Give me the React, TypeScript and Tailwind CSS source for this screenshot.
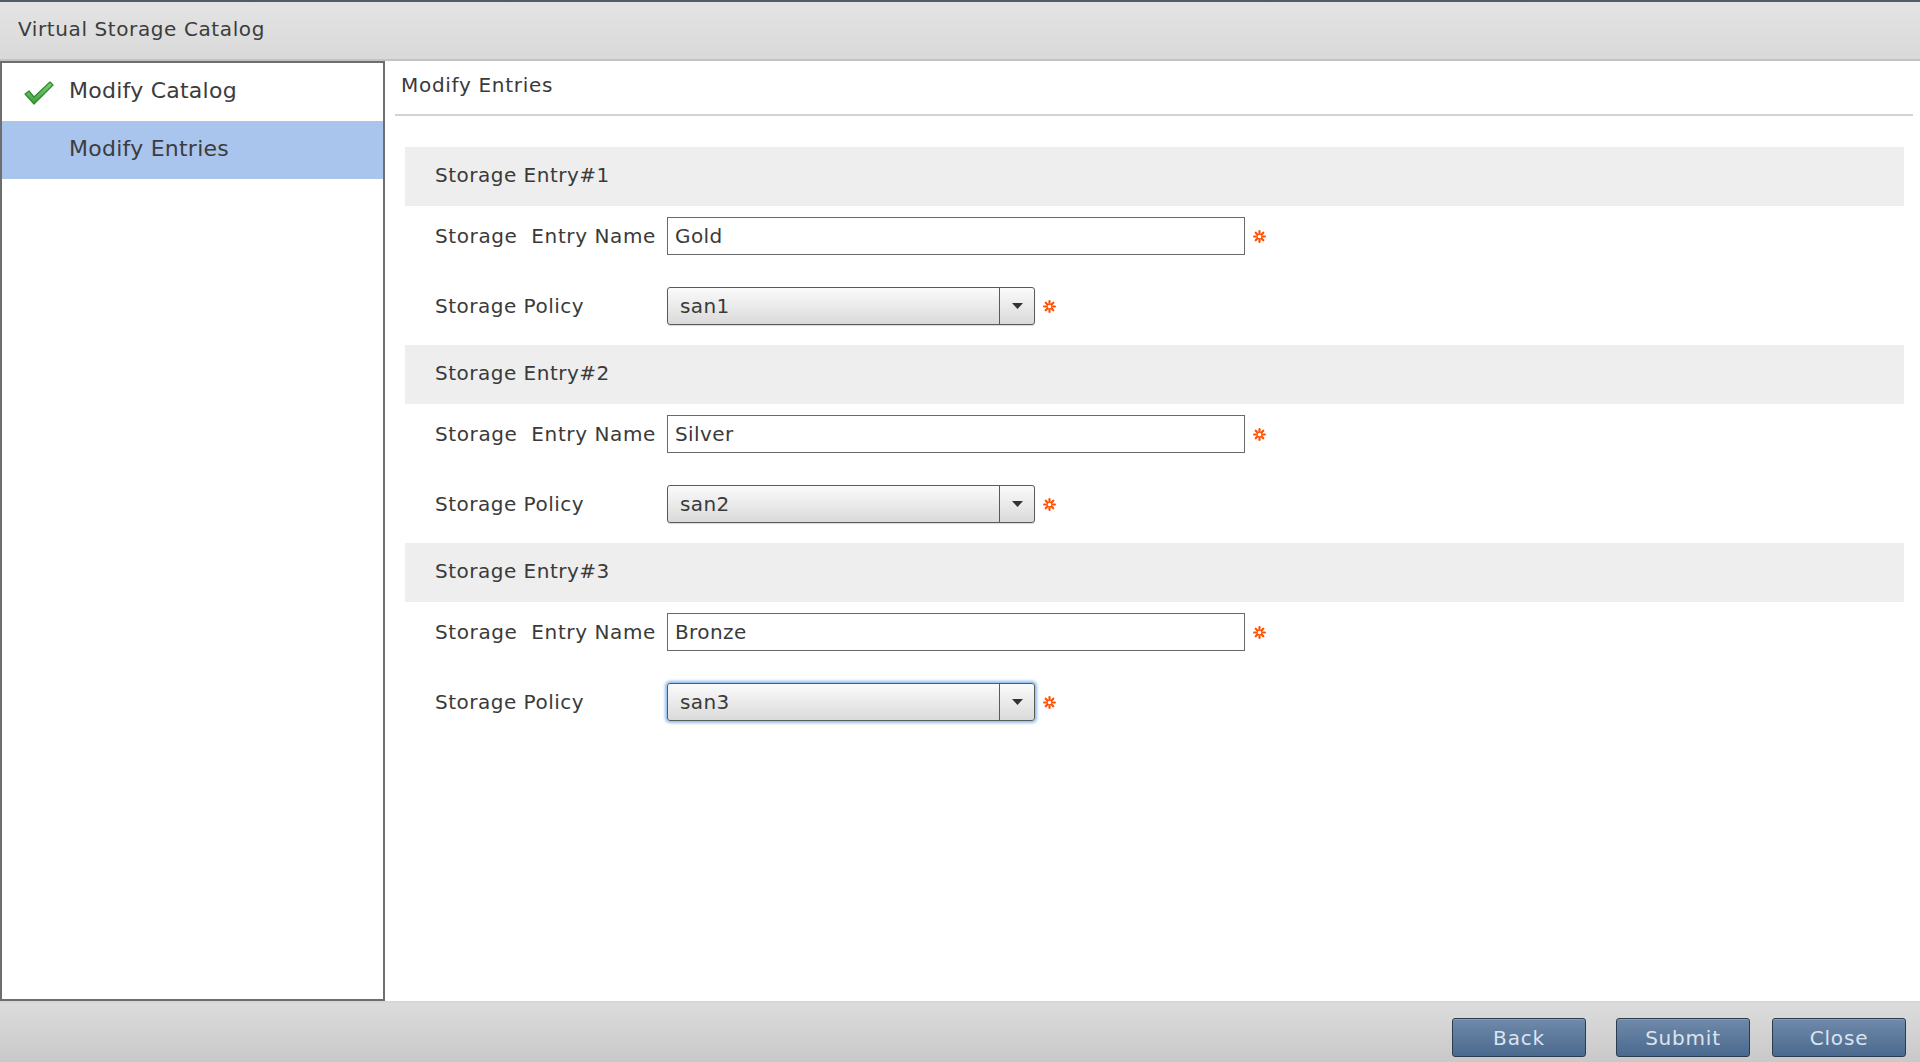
import React from "react";

type Entry = {
  num: number;
  name: string;
  policy: string;
  focused?: boolean;
};

const entries: Entry[] = [
  { num: 1, name: "Gold", policy: "san1" },
  { num: 2, name: "Silver", policy: "san2" },
  { num: 3, name: "Bronze", policy: "san3", focused: true },
];

const font = { fontFamily: "'DejaVu Sans', 'Liberation Sans', sans-serif" };

function Required() {
  return (
    <svg width="13" height="13" viewBox="0 0 12 12" className="shrink-0">
      <g stroke="#ff5000" strokeWidth="2" strokeLinecap="round">
        <line x1="6" y1="1" x2="6" y2="11" />
        <line x1="1" y1="6" x2="11" y2="6" />
        <line x1="2.5" y1="2.5" x2="9.5" y2="9.5" />
        <line x1="9.5" y1="2.5" x2="2.5" y2="9.5" />
      </g>
      <circle cx="6" cy="6" r="1.6" fill="#fff" />
    </svg>
  );
}

function Check() {
  return (
    <svg width="32" height="26" viewBox="0 0 32 26">
      <defs>
        <linearGradient id="chk" x1="0" y1="0" x2="0" y2="1">
          <stop offset="0" stopColor="#7fd07a" />
          <stop offset="1" stopColor="#3f9e3f" />
        </linearGradient>
      </defs>
      <path
        d="M2 14 L6 11 L11 17 L27 2 L30 5 L11 24 Z"
        fill="url(#chk)"
        stroke="#2f8a2f"
        strokeWidth="1.2"
        strokeLinejoin="round"
      />
    </svg>
  );
}

function Select({ value, focused }: { value: string; focused?: boolean }) {
  return (
    <div
      className={`flex h-[38px] w-[368px] rounded-[3px] border border-[#5a5a5a] bg-gradient-to-b from-[#fbfbfb] to-[#dadada] ${
        focused ? "shadow-[0_0_3px_2px_#8fbdf0]" : "shadow-[0_1px_1px_rgba(0,0,0,0.15)]"
      }`}
    >
      <div className="flex flex-1 items-center pl-[12px] text-[20px] tracking-[0.4px] text-[#3a3a3a]">{value}</div>
      <div className="flex w-[35px] items-center justify-center border-l border-[#5a5a5a]">
        <svg width="11" height="6" viewBox="0 0 11 6">
          <path d="M0 0 L11 0 L5.5 6 Z" fill="#333" />
        </svg>
      </div>
    </div>
  );
}

export default function App() {
  return (
    <div className="flex h-[1062px] w-[1920px] flex-col overflow-hidden bg-white" style={font}>
      {/* header */}
      <div className="flex h-[61px] shrink-0 items-center border-t-2 border-b-2 border-t-[#525c69] border-b-[#c2c2c2] bg-gradient-to-b from-[#e4e4e4] to-[#d9d9d9] pb-[4px] pl-[18px]">
        <span className="text-[20px] tracking-[0.6px] text-[#3c3c3c]">Virtual Storage Catalog</span>
      </div>

      <div className="flex flex-1">
        {/* left wizard steps */}
        <div className="w-[385px] shrink-0 border-2 border-[#6e6e6e] bg-white">
          <div className="flex h-[58px] items-center">
            <div className="w-[67px] pl-[21px] pt-[2px]">
              <Check />
            </div>
            <span className="pb-[4px] text-[22px] tracking-[0.25px] text-[#3c3c3c]">Modify Catalog</span>
          </div>
          <div className="flex h-[58px] items-center bg-[#a9c5ee] pb-[4px] pl-[67px]">
            <span className="text-[22px] tracking-[0.25px] text-[#3c3c3c]">Modify Entries</span>
          </div>
        </div>

        {/* right form */}
        <div className="flex-1 pl-[10px] pr-[7px]">
          <div className="flex h-[55px] items-center border-b-2 border-[#d3d3d3] pb-[6px] pl-[6px]">
            <span className="text-[20px] tracking-[0.7px] text-[#3a3a3a]">Modify Entries</span>
          </div>

          <div className="ml-[10px] mr-[9px] mt-[31px]">
            {entries.map((e) => (
              <div key={e.num} className="pb-[20px]">
                <div className="flex h-[59px] items-center bg-[#eeeeee] pb-[4px] pl-[30px] text-[20px] tracking-[0.5px] text-[#3a3a3a]">
                  Storage Entry#{e.num}
                </div>
                <div className="mt-[11px] flex items-center pl-[30px]">
                  <div className="w-[232px] text-[20px] tracking-[0.6px] text-[#3a3a3a]">Storage&nbsp; Entry Name</div>
                  <div className="flex h-[38px] w-[578px] items-center border border-[#6a6a6a] bg-white pl-[7px] text-[20px] tracking-[0.4px] text-[#3a3a3a]">
                    {e.name}
                  </div>
                  <div className="ml-[8px]">
                    <Required />
                  </div>
                </div>
                <div className="mt-[32px] flex items-center pl-[30px]">
                  <div className="w-[232px] text-[20px] tracking-[0.5px] text-[#3a3a3a]">Storage Policy</div>
                  <Select value={e.policy} focused={e.focused} />
                  <div className="ml-[8px]">
                    <Required />
                  </div>
                </div>
              </div>
            ))}
          </div>
        </div>
      </div>

      {/* footer */}
      <div className="flex h-[61px] shrink-0 items-end justify-end border-t-2 border-[#d6d6d6] bg-gradient-to-b from-[#dcdcdc] to-[#c9c9c9] pb-[5px] pr-[14px]">
        {["Back", "Submit", "Close"].map((label, i) => (
          <button
            key={label}
            className={`h-[39px] w-[134px] rounded-[3px] border border-[#2c3b4e] bg-gradient-to-b from-[#6f89a9] to-[#4b6a8f] text-[20px] tracking-[0.8px] text-[#dbe4ee] shadow-[inset_0_1px_0_rgba(255,255,255,0.2)] ${
              i === 0 ? "" : i === 1 ? "ml-[30px]" : "ml-[22px]"
            }`}
          >
            {label}
          </button>
        ))}
      </div>
    </div>
  );
}
